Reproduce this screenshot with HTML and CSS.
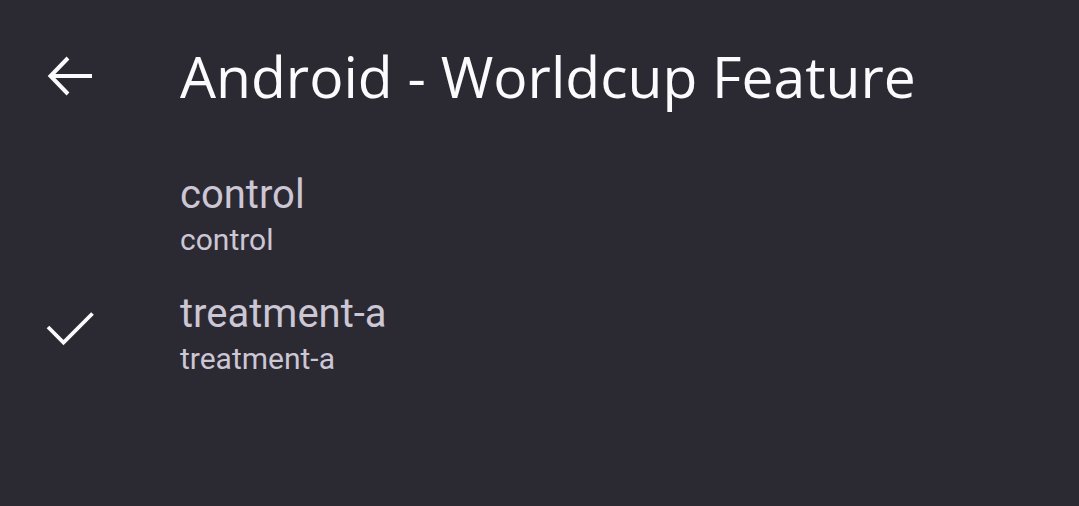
FILE: index.html
```html
<!DOCTYPE html>
<html lang="en">
<head>
    <meta charset="UTF-8">
    <meta name="viewport" content="width=device-width, initial-scale=1.0">
    <title>Android - Worldcup Feature</title>
    <link rel="stylesheet" href="styles.css">
</head>
<body>
    <header class="toolbar">
        <button class="nav-icon" aria-label="Back">
            <svg width="48" height="48" viewBox="0 0 48 48">
                <path d="M5 24H46M22 6L4.5 24L22 42" fill="none" stroke="currentColor" stroke-width="4"/>
            </svg>
        </button>
        <h1 class="title">Android - Worldcup Feature</h1>
    </header>

    <ul class="variants">
        <li class="variant">
            <span class="check"></span>
            <div class="labels">
                <div class="primary">control</div>
                <div class="secondary">control</div>
            </div>
        </li>
        <li class="variant selected">
            <span class="check">
                <svg width="48" height="48" viewBox="0 0 48 48">
                    <path d="M2 21L17.5 36.5L46.5 7.5" fill="none" stroke="currentColor" stroke-width="3.8"/>
                </svg>
            </span>
            <div class="labels">
                <div class="primary">treatment-a</div>
                <div class="secondary">treatment-a</div>
            </div>
        </li>
    </ul>
</body>
</html>
```

FILE: styles.css
```css
body {
    margin: 0;
    background: #2b2a33;
    color: #fbfbfe;
    font-family: Roboto, "Noto Sans", sans-serif;
}
.toolbar {
    display: flex;
    align-items: center;
    height: 152px;
    padding-left: 46px;
}
.nav-icon {
    background: none;
    border: none;
    padding: 0;
    color: #fbfbfe;
    width: 48px;
    height: 48px;
    display: flex;
}
.title {
    margin: 0 0 0 86px;
    font-family: "Open Sans", sans-serif;
    font-weight: 400;
    font-size: 57px;
}
.variants {
    list-style: none;
    margin: 0;
    padding: 4px 0 0;
}
.variant {
    display: flex;
    align-items: center;
    height: 119px;
    padding-left: 46px;
}
.check {
    width: 48px;
    height: 48px;
    margin-bottom: 10px;
    color: #fbfbfe;
}
.labels {
    margin-left: 86px;
    color: #cdc6d4;
}
.primary {
    font-size: 40px;
    line-height: 48px;
}
.secondary {
    font-size: 30px;
    line-height: 42px;
}
```
